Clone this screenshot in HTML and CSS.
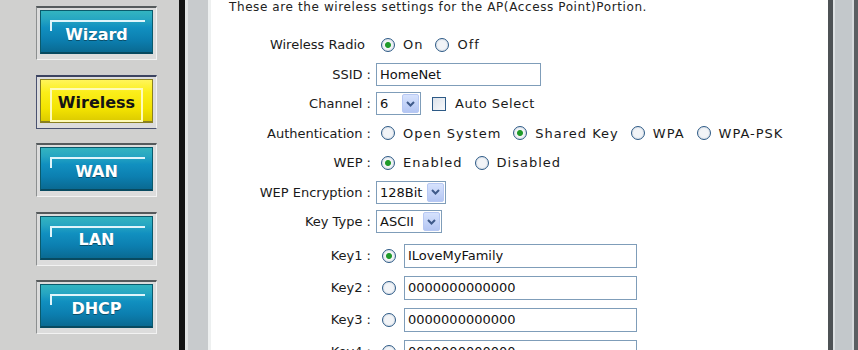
FILE: index.html
```html
<!DOCTYPE html>
<html lang="en">
  <head>
    <meta charset="UTF-8" />
    <meta name="viewport" content="width=device-width, initial-scale=1.0" />
    <title>Wireless Settings</title>
    <link rel="stylesheet" href="styles.css">
  </head>
  <body>
    <div class="page">
      <nav class="nav">
        <a class="navbtn"><span class="navbtn__face">Wizard</span></a>
        <a class="navbtn navbtn--active"><span class="navbtn__face">Wireless</span></a>
        <a class="navbtn"><span class="navbtn__face">WAN</span></a>
        <a class="navbtn"><span class="navbtn__face">LAN</span></a>
        <a class="navbtn"><span class="navbtn__face">DHCP</span></a>
      </nav>
      <div class="divider"></div>
      <div class="strip"></div>

      <main class="content">
        <p class="intro">These are the wireless settings for the AP(Access Point)Portion.</p>

        <div class="form">
          <span class="form__label form__label--nocolon">Wireless Radio</span>
          <span class="form__value">
            <span class="radio radio--on"></span><span class="option">On</span>
            <span class="radio"></span><span class="option">Off</span>
          </span>

          <span class="form__label">SSID :</span>
          <span class="form__value">
            <input class="field field--ssid" type="text" value="HomeNet" />
          </span>

          <span class="form__label">Channel :</span>
          <span class="form__value">
            <span class="select select--channel">
              <span class="select__text">6</span>
              <span class="select__btn"><svg width="9" height="6" viewBox="0 0 9 6"><path d="M1 1l3.5 3.5L8 1" fill="none" stroke="#3f5a8a" stroke-width="2"/></svg></span>
            </span>
            <span class="checkbox"></span><span class="check-label">Auto Select</span>
          </span>

          <span class="form__label">Authentication :</span>
          <span class="form__value">
            <span class="radio"></span><span class="option">Open System</span>
            <span class="radio radio--on"></span><span class="option">Shared Key</span>
            <span class="radio"></span><span class="option">WPA</span>
            <span class="radio"></span><span class="option">WPA-PSK</span>
          </span>

          <span class="form__label">WEP :</span>
          <span class="form__value">
            <span class="radio radio--on"></span><span class="option">Enabled</span>
            <span class="radio"></span><span class="option">Disabled</span>
          </span>

          <span class="form__label">WEP Encryption :</span>
          <span class="form__value">
            <span class="select select--enc">
              <span class="select__text">128Bit</span>
              <span class="select__btn"><svg width="9" height="6" viewBox="0 0 9 6"><path d="M1 1l3.5 3.5L8 1" fill="none" stroke="#3f5a8a" stroke-width="2"/></svg></span>
            </span>
          </span>

          <span class="form__label">Key Type :</span>
          <span class="form__value">
            <span class="select select--type">
              <span class="select__text">ASCII</span>
              <span class="select__btn"><svg width="9" height="6" viewBox="0 0 9 6"><path d="M1 1l3.5 3.5L8 1" fill="none" stroke="#3f5a8a" stroke-width="2"/></svg></span>
            </span>
          </span>
        </div>

        <div class="form form--keys">
          <span class="form__label">Key1 :</span>
          <span class="form__value form__value--key">
            <span class="radio radio--on"></span>
            <input class="field field--key" type="text" value="ILoveMyFamily" />
          </span>

          <span class="form__label">Key2 :</span>
          <span class="form__value form__value--key">
            <span class="radio"></span>
            <input class="field field--key" type="text" value="0000000000000" />
          </span>

          <span class="form__label">Key3 :</span>
          <span class="form__value form__value--key">
            <span class="radio"></span>
            <input class="field field--key" type="text" value="0000000000000" />
          </span>

          <span class="form__label">Key4 :</span>
          <span class="form__value form__value--key">
            <span class="radio"></span>
            <input class="field field--key" type="text" value="0000000000000" />
          </span>
        </div>
      </main>

      <div class="rail"></div>
    </div>
  </body>
</html>
```

FILE: styles.css
```css
* {
  box-sizing: border-box;
}

body {
  margin: 0;
  background: #fff;
  font-family: 'DejaVu Sans', Verdana, sans-serif;
  color: #1a1a1a;
}

.page {
  display: flex;
  width: 858px;
  height: 350px;
  overflow: hidden;
}

/* left navigation */

.nav {
  width: 179px;
  flex-shrink: 0;
  background: #d0d0cf;
  padding: 6px 0 0 36px;
  display: flex;
  flex-direction: column;
  gap: 14.5px;
}

.navbtn {
  display: flex;
  width: 121px;
  height: 54px;
  padding: 2px 3px 5px 3px;
  background: #dcdcdc;
  border-top: 2px solid #555a5c;
  border-left: 1px solid #8c8f90;
  border-right: 1px solid #f2f2f2;
  border-bottom: 1px solid #f2f2f2;
}

.navbtn__face {
  position: relative;
  flex: 1;
  display: flex;
  align-items: center;
  justify-content: center;
  padding-top: 5px;
  border: 1px solid #0a5a6c;
  border-bottom: 2px solid #084a60;
  background: linear-gradient(#33b4c0 0, #26a6c2 20%, #1190c0 40%, #0c7fb0 70%, #0a6a92 100%);
  color: #fff;
  font-weight: bold;
  font-size: 16px;
  text-shadow: 0 1px 0 #0a4f6a;
}

.navbtn__face::before {
  content: '';
  position: absolute;
  top: 9px;
  left: 9px;
  right: 7px;
  height: 9px;
  border-top: 2px solid #dff5fb;
  border-left: 2px solid #dff5fb;
}

.navbtn--active {
  border-top-color: #3b4360;
  border-left-color: #4a5270;
  border-bottom-color: #4a5270;
}

.navbtn--active .navbtn__face {
  border-color: #8a8020;
  background: linear-gradient(#fff55a 0, #fbee1a 30%, #f3e300 70%, #dccb00 100%);
  color: #141414;
  text-shadow: none;
}

.navbtn--active .navbtn__face::before {
  top: 8px;
  left: 9px;
  right: 9px;
  height: 30px;
  border: 2px solid #fffbb8;
}

/* frame pieces */

.divider {
  width: 6px;
  flex-shrink: 0;
  background: #121212;
}

.strip {
  width: 26px;
  flex-shrink: 0;
  background: #c8cbcd;
  border-left: 3px solid #e0e2e3;
  border-right: 3px solid #eef0f0;
}

.rail {
  width: 30px;
  flex-shrink: 0;
  background: #c3c8cb;
  border-left: 5px solid #4d5255;
  border-right: 4px solid #5a5f62;
  box-shadow: inset 2px 0 0 #dde1e3, inset -2px 0 0 #d6dadc;
}

/* content */

.content {
  flex: 1;
  background: #fff;
}

.intro {
  margin: 0;
  padding-left: 18px;
  height: 14px;
  line-height: 14px;
  font-size: 12px;
  letter-spacing: 0.6px;
  color: #222;
}

.form {
  display: grid;
  grid-template-columns: 160px 1fr;
  grid-auto-rows: 29.5px;
  column-gap: 5px;
  align-items: center;
  margin-top: 16px;
}

.form--keys {
  grid-auto-rows: 32px;
  margin-top: 3px;
}

.form__label {
  text-align: right;
  font-size: 13px;
  white-space: nowrap;
}

.form__label--nocolon {
  padding-right: 6px;
}

.form__value {
  display: flex;
  align-items: center;
  font-size: 13px;
}

.form__value--key {
  padding-left: 6px;
  gap: 8px;
}

.radio {
  width: 14px;
  height: 14px;
  flex-shrink: 0;
  margin-left: 5px;
  border: 1.5px solid #2d5a86;
  border-radius: 50%;
  background: radial-gradient(circle, #f2f4f7 0 4px, #dde3ea 6px);
}

.form__value--key .radio {
  margin-left: 0;
}

.radio--on {
  background: radial-gradient(circle, #1f9a2a 0 2.5px, #f2f4f7 3.5px 4px, #dde3ea 6px);
}

.option {
  margin-left: 8px;
  margin-right: 7px;
  letter-spacing: 1px;
}

.field {
  height: 23px;
  padding: 0 3px;
  border: 1px solid #7f9db9;
  font-family: 'DejaVu Sans', Verdana, sans-serif;
  font-size: 13px;
  color: #111;
  background: #fff;
  outline: none;
}

.field--ssid {
  width: 165px;
}

.field--key {
  width: 233px;
  height: 24px;
}

.select {
  display: flex;
  align-items: center;
  height: 23px;
  padding: 1px;
  border: 1px solid #7f9db9;
  background: #fff;
}

.select__text {
  flex: 1;
  padding-left: 2px;
  font-size: 13px;
  color: #111;
}

.select__btn {
  width: 17px;
  height: 100%;
  display: flex;
  align-items: center;
  justify-content: center;
  border: 1px solid #b7c8f3;
  border-radius: 2px;
  background: linear-gradient(#d6e2fd, #b4c6f3);
}

.select--channel {
  width: 45px;
}

.select--enc {
  width: 70px;
}

.select--type {
  width: 66px;
}

.checkbox {
  width: 14px;
  height: 14px;
  margin-left: 11px;
  border: 1.5px solid #2d5a86;
  background: linear-gradient(135deg, #dce2ea, #f8f9fb);
}

.check-label {
  margin-left: 9px;
  letter-spacing: 0.5px;
}
```
